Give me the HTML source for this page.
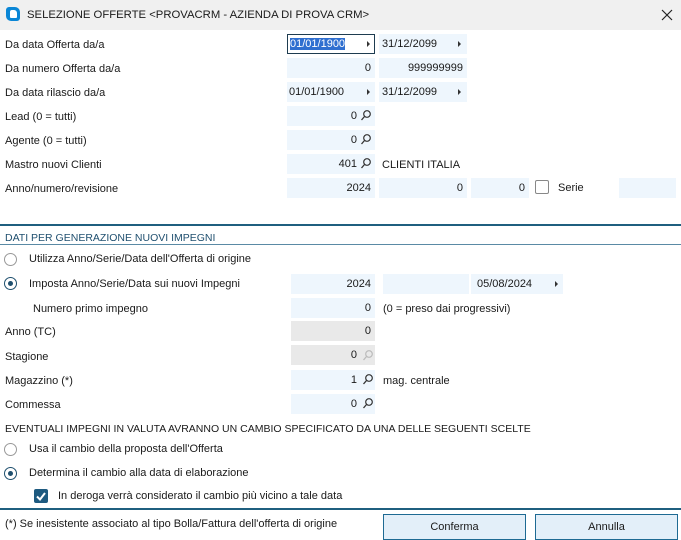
<!DOCTYPE html>
<html><head><meta charset="utf-8"><style>
*{margin:0;padding:0;box-sizing:border-box}
body{width:681px;height:539px;background:#fff;font-family:"Liberation Sans",sans-serif;font-size:11px;color:#1a1a1a;position:relative;overflow:hidden}
.a{position:absolute;white-space:nowrap}
.t{position:absolute;white-space:nowrap;line-height:14px}
.f{position:absolute;height:20px;background:#eef6fd;line-height:20px;text-align:right;padding-right:4px}
.g{background:#e9e9e9}
.arr{position:absolute;width:0;height:0;border-left:3px solid #333;border-top:3px solid transparent;border-bottom:3px solid transparent}
.rad{position:absolute;width:13px;height:13px;border-radius:50%;border:1px solid #999;background:#fff}
.rad.on{border-color:#1e4f6e}
.rad.on:after{content:"";position:absolute;left:3px;top:3px;width:5px;height:5px;border-radius:50%;background:#1e4f6e}
.btn{position:absolute;height:26px;border:1px solid #1e6a93;background:#e3eff9;text-align:center;line-height:24px}
</style></head><body>
<div class="a" style="left:0;top:0;width:681px;height:30px;background:#f0f0f0"></div>
<div class="a" style="left:6px;top:7px;width:14px;height:14px;background:#0a86d6;border-radius:3px 5px 3px 5px"></div>
<div class="a" style="left:10px;top:10px;width:7px;height:8px;background:#fff;border-radius:2px 3px 1px 1px"></div>
<div class="t" style="left:27px;top:8px;font-size:11.3px">SELEZIONE OFFERTE &lt;PROVACRM - AZIENDA DI PROVA CRM&gt;</div>
<svg class="a" style="left:661px;top:9px" width="12" height="12"><path d="M1 1L11 11M11 1L1 11" stroke="#222" stroke-width="1.2"/></svg>

<div class="t" style="left:5px;top:38px">Da data Offerta da/a</div>
<div class="t" style="left:5px;top:62px">Da numero Offerta da/a</div>
<div class="t" style="left:5px;top:86px">Da data rilascio da/a</div>
<div class="t" style="left:5px;top:110px">Lead (0 = tutti)</div>
<div class="t" style="left:5px;top:134px">Agente (0 = tutti)</div>
<div class="t" style="left:5px;top:158px">Mastro nuovi Clienti</div>
<div class="t" style="left:5px;top:182px">Anno/numero/revisione</div>

<div class="f" style="left:287px;top:34px;width:88px;border:1px solid #1e3c50;background:#fff;text-align:left;padding-left:2px;line-height:18px"><span style="background:#2f6fd0;color:#fff">01/01/1900</span></div>
<div class="arr" style="left:367px;top:41px"></div>
<div class="f" style="left:379px;top:34px;width:88px;text-align:left;padding-left:3px">31/12/2099</div>
<div class="arr" style="left:458px;top:41px"></div>
<div class="f" style="left:287px;top:58px;width:88px">0</div>
<div class="f" style="left:379px;top:58px;width:88px">999999999</div>
<div class="f" style="left:287px;top:82px;width:88px;text-align:left;padding-left:2px">01/01/1900</div>
<div class="arr" style="left:367px;top:89px"></div>
<div class="f" style="left:379px;top:82px;width:88px;text-align:left;padding-left:3px">31/12/2099</div>
<div class="arr" style="left:458px;top:89px"></div>
<div class="f" style="left:287px;top:106px;width:88px;padding-right:18px">0</div>
<div class="f" style="left:287px;top:130px;width:88px;padding-right:18px">0</div>
<div class="f" style="left:287px;top:154px;width:88px;padding-right:18px">401</div>
<div class="t" style="left:382px;top:158px">CLIENTI ITALIA</div>
<div class="f" style="left:287px;top:178px;width:88px">2024</div>
<div class="f" style="left:379px;top:178px;width:88px">0</div>
<div class="f" style="left:471px;top:178px;width:58px">0</div>
<div class="a" style="left:535px;top:180px;width:14px;height:14px;border:1px solid #888;background:#fff;border-radius:2px"></div>
<div class="t" style="left:558px;top:181px">Serie</div>
<div class="f" style="left:619px;top:178px;width:57px"></div>

<div class="a" style="left:0;top:224px;width:681px;height:2px;background:#1f5f7f"></div>
<div class="t" style="left:5px;top:231px;color:#1f4f6f;font-size:10.5px">DATI PER GENERAZIONE NUOVI IMPEGNI</div>
<div class="a" style="left:0;top:244px;width:681px;height:1px;background:#5a8aa5"></div>

<div class="rad" style="left:4px;top:253px"></div>
<div class="t" style="left:29px;top:252px">Utilizza Anno/Serie/Data dell'Offerta di origine</div>
<div class="rad on" style="left:4px;top:277px"></div>
<div class="t" style="left:29px;top:277px">Imposta Anno/Serie/Data sui nuovi Impegni</div>
<div class="f" style="left:291px;top:274px;width:84px">2024</div>
<div class="f" style="left:383px;top:274px;width:86px"></div>
<div class="f" style="left:471px;top:274px;width:92px;text-align:left;padding-left:6px">05/08/2024</div>
<div class="arr" style="left:555px;top:281px"></div>
<div class="t" style="left:33px;top:302px">Numero primo impegno</div>
<div class="f" style="left:291px;top:298px;width:84px">0</div>
<div class="t" style="left:383px;top:302px">(0 = preso dai progressivi)</div>
<div class="t" style="left:5px;top:325px">Anno (TC)</div>
<div class="f g" style="left:291px;top:321px;width:84px">0</div>
<div class="t" style="left:5px;top:350px">Stagione</div>
<div class="f g" style="left:291px;top:345px;width:84px;padding-right:18px">0</div>
<div class="t" style="left:5px;top:374px">Magazzino (*)</div>
<div class="f" style="left:291px;top:370px;width:84px;padding-right:18px">1</div>
<div class="t" style="left:383px;top:374px">mag. centrale</div>
<div class="t" style="left:5px;top:398px">Commessa</div>
<div class="f" style="left:291px;top:394px;width:84px;padding-right:18px">0</div>

<svg class="a" style="left:360px;top:109px" width="12" height="12"><circle cx="7" cy="5" r="3.3" fill="none" stroke="#333" stroke-width="1.2"/><path d="M4.5 7.5L1.5 11" stroke="#333" stroke-width="1.3"/></svg>
<svg class="a" style="left:360px;top:133px" width="12" height="12"><circle cx="7" cy="5" r="3.3" fill="none" stroke="#333" stroke-width="1.2"/><path d="M4.5 7.5L1.5 11" stroke="#333" stroke-width="1.3"/></svg>
<svg class="a" style="left:360px;top:157px" width="12" height="12"><circle cx="7" cy="5" r="3.3" fill="none" stroke="#333" stroke-width="1.2"/><path d="M4.5 7.5L1.5 11" stroke="#333" stroke-width="1.3"/></svg>
<svg class="a" style="left:362px;top:349px" width="12" height="12"><circle cx="7" cy="5" r="3.3" fill="none" stroke="#bbb" stroke-width="1.2"/><path d="M4.5 7.5L1.5 11" stroke="#bbb" stroke-width="1.3"/></svg>
<svg class="a" style="left:362px;top:373px" width="12" height="12"><circle cx="7" cy="5" r="3.3" fill="none" stroke="#333" stroke-width="1.2"/><path d="M4.5 7.5L1.5 11" stroke="#333" stroke-width="1.3"/></svg>
<svg class="a" style="left:362px;top:397px" width="12" height="12"><circle cx="7" cy="5" r="3.3" fill="none" stroke="#333" stroke-width="1.2"/><path d="M4.5 7.5L1.5 11" stroke="#333" stroke-width="1.3"/></svg>

<div class="t" style="left:5px;top:422px;font-size:10.5px">EVENTUALI IMPEGNI IN VALUTA AVRANNO UN CAMBIO SPECIFICATO DA UNA DELLE SEGUENTI SCELTE</div>
<div class="rad" style="left:4px;top:443px"></div>
<div class="t" style="left:29px;top:442px">Usa il cambio della proposta dell'Offerta</div>
<div class="rad on" style="left:4px;top:467px"></div>
<div class="t" style="left:29px;top:466px">Determina il cambio alla data di elaborazione</div>
<div class="a" style="left:34px;top:489px;width:14px;height:14px;background:#1e5a80;border-radius:2px"></div>
<svg class="a" style="left:34px;top:489px" width="14" height="14"><path d="M3 7.5L6 10.5L11 4" fill="none" stroke="#fff" stroke-width="2"/></svg>
<div class="t" style="left:58px;top:489px">In deroga verrà considerato il cambio più vicino a tale data</div>
<div class="a" style="left:0;top:508px;width:681px;height:2px;background:#1f5f7f"></div>
<div class="t" style="left:5px;top:517px">(*) Se inesistente associato al tipo Bolla/Fattura dell'offerta di origine</div>
<div class="btn" style="left:383px;top:514px;width:143px">Conferma</div>
<div class="btn" style="left:535px;top:514px;width:143px">Annulla</div>
</body></html>
